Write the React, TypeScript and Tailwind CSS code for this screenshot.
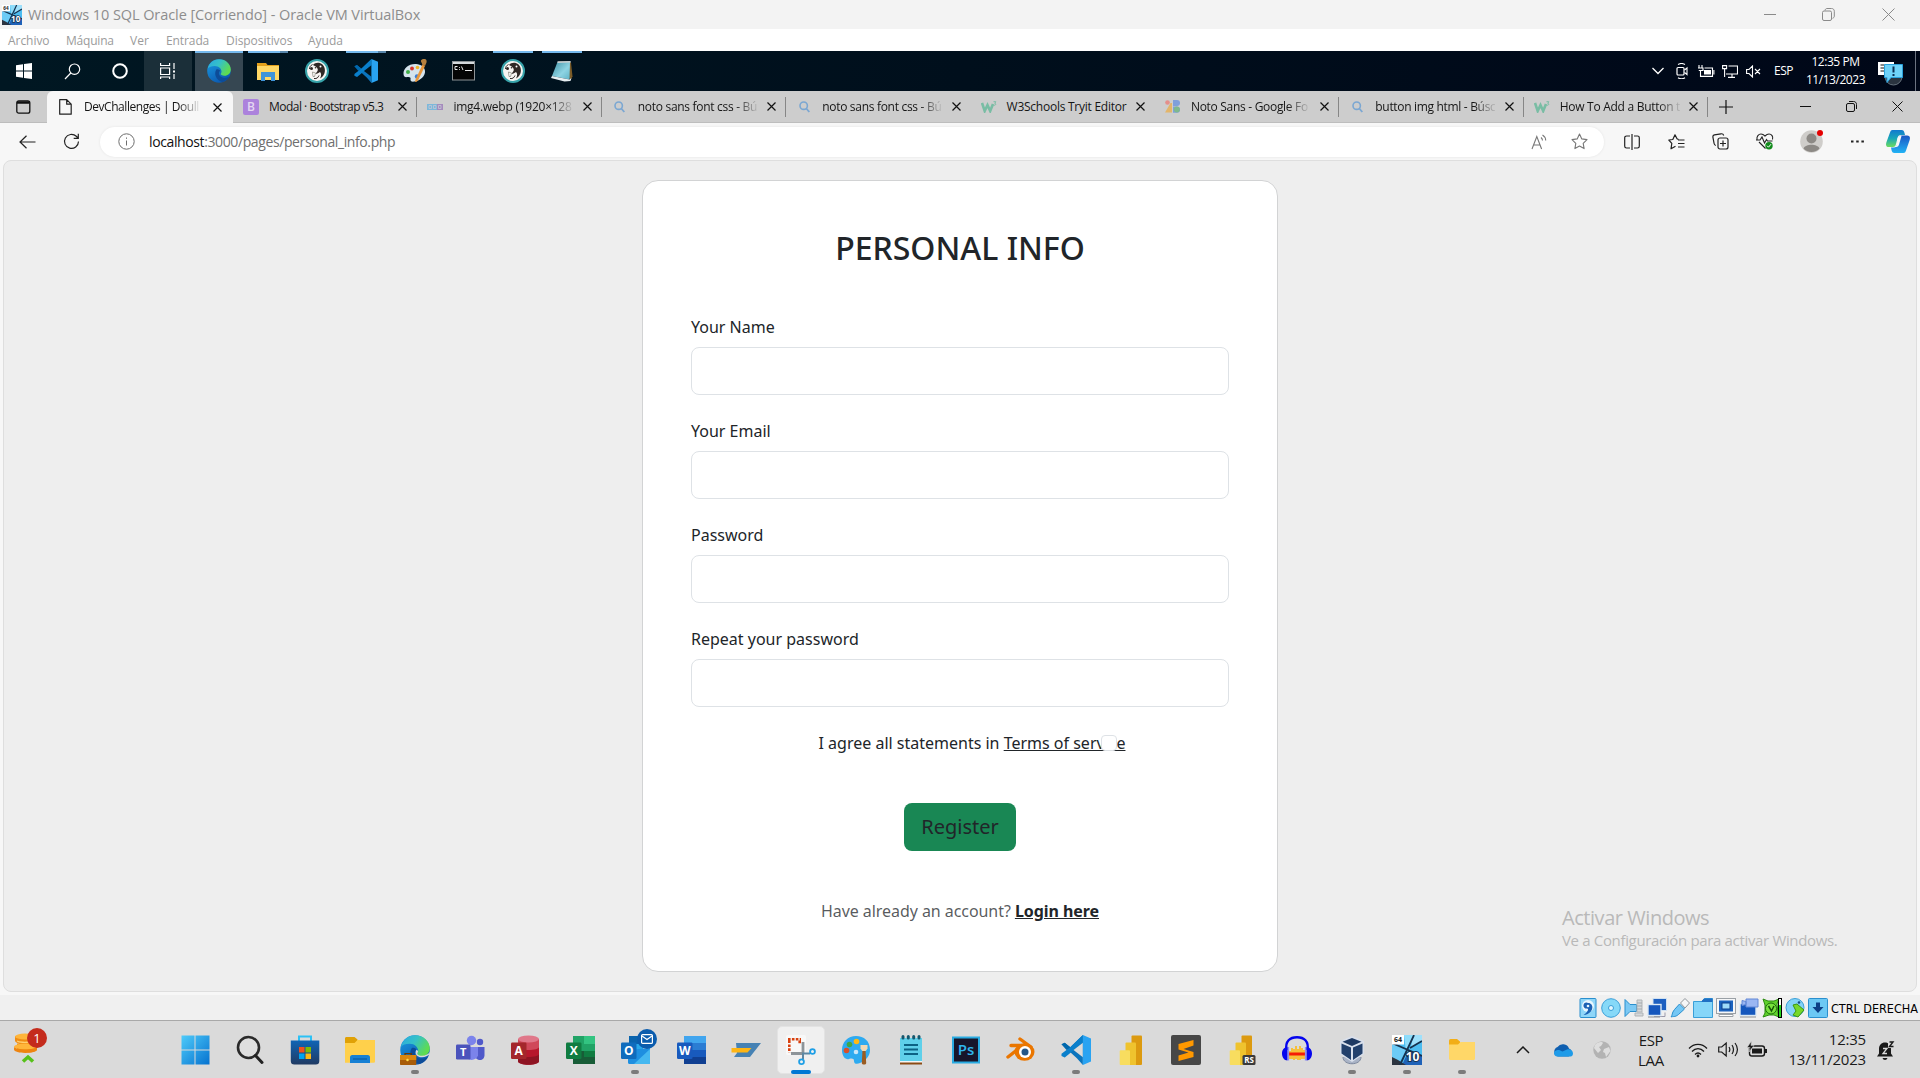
import type { ReactNode } from "react";

const UI = "font-['Open_Sans','Noto_Sans',sans-serif]";

function Svg({ w, h, vb, children, className = "" }: { w: number; h: number; vb?: string; children: ReactNode; className?: string }) {
  return (
    <svg width={w} height={h} viewBox={vb ?? `0 0 ${w} ${h}`} fill="none" className={`shrink-0 ${className}`}>
      {children}
    </svg>
  );
}

/* ---------- Application logos ---------- */

function EdgeLogo({ size, briefcase }: { size: number; briefcase?: boolean }) {
  return (
    <Svg w={size} h={size} vb="0 0 24 24">
      <defs>
        <linearGradient id="edgeTop" x1="0" y1="0" x2="1" y2="0.5">
          <stop offset="0" stopColor="#2aa8e0" />
          <stop offset="0.5" stopColor="#35c1c8" />
          <stop offset="1" stopColor="#5fdc4f" />
        </linearGradient>
        <linearGradient id="edgeBody" x1="0" y1="0" x2="0.6" y2="1">
          <stop offset="0" stopColor="#1b9de2" />
          <stop offset="1" stopColor="#0b58b0" />
        </linearGradient>
      </defs>
      <circle cx="12" cy="12" r="11.8" fill="url(#edgeBody)" />
      <path d="M.8 9.5C2 4 6.500 .2 12 .2c7 0 11.800 5 11.800 10.300 0 3.800-2.900 6.300-6.300 6.300-2.600 0-3.900-1-3.900-1.700 0-.5.9-1 .9-2.700 0-2.500-2.700-5.400-6.800-5.400-3.300 0-5.700 1-6.900 2.500z" fill="url(#edgeTop)" />
      <path d="M9.300 10.500c-2.700 4.500-.3 10.500 6.200 12.700 3-1 5.700-3 7-5.600-3.300 1.900-7.600 1.700-9.500-.5-1.600-1.800-1.400-4.200.2-5.300-.6-1.300-2.500-2.200-3.900-1.300z" fill="#0d4c98" />
      {briefcase && (
        <g>
          <path d="M23.800 15.200c-1.500 1.900-5.200 3.300-8.400 2.300-3-.9-3.500-3.500-2.200-5.700 1.600.6 1.500 1.800.6 2.900 0 1 2 1.900 3.900 1.900 2.300 0 4.700-1 6.100-3z" fill="#dadada" />
          <path d="M4 16v-1.200h5V16" stroke="#6b3b05" />
          <rect x="0" y="16" width="13" height="8" rx=".6" fill="#a85c08" />
          <rect x="0" y="16" width="13" height="4" fill="#d9860f" />
          <circle cx="6" cy="20" r="1" fill="#ffe04a" />
        </g>
      )}
    </Svg>
  );
}

function VsCode({ size }: { size: number }) {
  return (
    <Svg w={size} h={size} vb="0 0 24 24">
      <path d="M17.500 0L7.500 9.800 3 6.200.4 7.300l12.300 11.300L17.500 24z" fill="#0b74bd" />
      <path d="M17.500 6.200V0L7.500 9.500.4 15v1.700L3 17.900z" fill="#0a7fcb" />
      <path d="M.4 7.300L3 6.100l4.400 3.600-3 2.300zM17.500 17.800L10 12l7.500-5.800z" fill="#0068ad" />
      <path d="M10 12l7.500 5.800V6.200z" className="fill-current" />
      <path d="M17.500 0L24 2.800v18.400L17.500 24z" fill="#29a3f2" />
    </Svg>
  );
}

function Beaver() {
  return (
    <Svg w={24} h={24}>
      <circle cx="12" cy="12" r="11" fill="#f7f5f2" stroke="#37a3aa" strokeWidth="2" />
      <path d="M8 6c2-2.500 6.500-3 9.500-.5 3 3 3.300 8 .5 11.500-1 1-2 2-3 2.500 1.500-3 1.500-5 0-6.500-1.800 1-3 2-4.500 1.800 1-1.300 2-2.300 2.300-3.800C13 8.500 10.500 7.500 8 6z" fill="#2f2825" />
      <path d="M4.500 10c0-2 1-3.500 3-4.500" stroke="#2f2825" strokeWidth="1" />
      <circle cx="6.500" cy="9.500" r="1.500" fill="#2f2825" />
      <circle cx="10.500" cy="8.800" r=".8" fill="#2f2825" />
      <circle cx="15.500" cy="7.500" r="1" fill="#fff" />
      <path d="M7.500 13l3 1-1 3.500h-1.500z" fill="#fff" stroke="#554" strokeWidth=".5" />
      <path d="M9 19.500c3 .5 4-1 5-3" stroke="#2f2825" strokeWidth="1" />
    </Svg>
  );
}

function PaintClassic() {
  return (
    <Svg w={24} h={24}>
      <path d="M13 5C6 4.500 0 9.500.5 15c.2 3 2 3.500 4 3 2-.4 3.500.2 3 2-.4 2 1 3 4 2.500 6-1 11-5.500 10.500-10.500C21.700 8 18 5.300 13 5z" fill="#d5e3ec" />
      <circle cx="5" cy="13" r="2" fill="#3fae49" />
      <circle cx="9" cy="9.500" r="1.900" fill="#d7352b" />
      <circle cx="14.500" cy="8.500" r="1.800" fill="#f0b92b" />
      <circle cx="14" cy="17.500" r="2.200" fill="#3d7fd6" />
      <path d="M19.500 5.500L22 7 15 21.500c-.6 1-2.300 1.800-2.700 1.500-.4-.5 0-1.800.5-3z" fill="#e8963a" />
      <path d="M18 1.500c1.500-2 5-1.800 5.500 0 .6 2-1 3.500-1.500 5.500l-3-1.500c.5-1.500-1.500-2.500-1-4z" fill="#b5803f" />
    </Svg>
  );
}

function Cmd() {
  return (
    <Svg w={24} h={20} className="-mt-px">
      <rect x=".5" y=".5" width="22" height="18.500" fill="#050505" stroke="#8e9396" />
      <rect x="1" y="1" width="21" height="2" fill="#d6dadd" />
      <path d="M5.500 5.500H3v3h2.500M7.500 6v.8m0 1.400V9M9.500 5.500l1.500 3.500M13 9.500h7" stroke="#e8e8e8" />
    </Svg>
  );
}

function NotepadClassic() {
  return (
    <Svg w={24} h={24}>
      <path d="M8.500 2.500l12.500 1 1.500 14-2 3.500z" fill="#7b5c28" />
      <path d="M7.500 3L20 2.500l-.5 18L2 17z" fill="url(#npad)" />
      <path d="M2 17l17.500 3.500 2-1.500-1 3-6 .5L1 19z" fill="#e6eef1" />
      <path d="M7.500 2.300L20.500 2l.5 1.500-13.500.5z" fill="#c9cfd1" />
      <defs>
        <linearGradient id="npad" x1="0" y1="0" x2="1" y2="1">
          <stop offset="0" stopColor="#3c8ea2" />
          <stop offset=".6" stopColor="#8ed4e3" />
          <stop offset="1" stopColor="#5fb2c6" />
        </linearGradient>
      </defs>
    </Svg>
  );
}

function ExplorerClassic() {
  return (
    <Svg w={22} h={19}>
      <path d="M0 1h9l1.500 2H22v4H0z" fill="#e3a11c" />
      <rect x="0" y="4" width="22" height="14" fill="#ffd866" />
      <path d="M4 19v-9h14v9h-4v-4H8v4z" fill="#3f94d9" />
    </Svg>
  );
}

function Windows10Box({ size }: { size: number }) {
  return (
    <Svg w={size} h={size} vb="0 0 30 30">
      <rect width="30" height="30" fill="#4cbcf0" />
      <path d="M12 0h10l-5 12-3 4z" fill="#8edcfa" />
      <path d="M0 8l15 6-7 12H0z" fill="#6ccbf6" />
      <path d="M21 0h9v6l-11 7z" fill="#9fe0fb" />
      <path d="M17 15l13 5v10H10z" fill="#1f62b8" />
      <path d="M0 22l6 3 8 5H0z" fill="#2c3440" />
      <path d="M0 8l30 13M22 0L8 30M18 13l12-7" stroke="#16324f" strokeWidth="1.800" />
      <rect x="0" y="0" width="12" height="9.500" fill="#fff" />
      <text x="6" y="7.400" fontSize="7" fontWeight="700" textAnchor="middle" fill="#222" fontFamily="Open Sans">64</text>
      <text x="20.500" y="25.500" fontSize="12" fontWeight="700" textAnchor="middle" fill="#fff" stroke="#16324f" strokeWidth="2" paintOrder="stroke" fontFamily="Open Sans">10</text>
    </Svg>
  );
}

function OfficeLogo({ letter, tile, children }: { letter: string; tile: string; children: ReactNode }) {
  return (
    <Svg w={30} h={30}>
      {children}
      <rect x="1" y="7.500" width="15.500" height="16.500" rx="1.200" fill={tile} />
      <text x="8.700" y="20" fontSize="12" fontWeight="700" textAnchor="middle" fill="#fff" fontFamily="Open Sans">{letter}</text>
    </Svg>
  );
}

const PowerBars = () => (
  <>
    <path d="M12.500 1.500a1 1 0 011-1H22a1 1 0 011 1V29a1 1 0 01-1 1h-9.500z" fill="#dc9a10" />
    <path d="M6.500 8.500a1 1 0 011-1H16a1 1 0 011 1V30H6.500z" fill="#efc32e" />
    <path d="M.7 16.300a1 1 0 011-1H10a1 1 0 011 1V30H1.700a1 1 0 01-1-1z" fill="#f8dd5f" />
  </>
);

/* ---------- Host title and menu ---------- */

function HostTitle() {
  return (
    <div className="flex h-[29px] items-center bg-[#f3f3f3]">
      <div className="flex w-7 pl-[2px]"><Windows10Box size={20} /></div>
      <span className="flex-1 text-[14.500px] tracking-[-0.08px] text-[#8d8d8d]">Windows 10 SQL Oracle [Corriendo] - Oracle VM VirtualBox</span>
      <div className="flex items-center text-[#8a8a8a]">
        <div className="flex w-[58px] justify-center"><Svg w={12} h={12}><path d="M0 5.500h12" stroke="currentColor" /></Svg></div>
        <div className="flex w-[58px] justify-center">
          <Svg w={13} h={13}><rect x=".5" y="3" width="9" height="9.500" rx="1.500" stroke="currentColor" /><path d="M3 2.500C3.200 1.200 4 .5 5 .5h4.500c1.700 0 2.800 1 2.800 2.800V8c0 1.200-.7 2-1.800 2.300" stroke="currentColor" /></Svg>
        </div>
        <div className="mr-[1px] flex w-[62px] justify-center"><Svg w={13} h={13}><path d="M.5.500l12 12M12.500.500l-12 12" stroke="currentColor" /></Svg></div>
      </div>
    </div>
  );
}

function HostMenu() {
  return (
    <div className="flex h-[22px] items-center bg-white pt-[2px] text-[12px] leading-none text-[#9b9b9b]">
      <span className="w-[58px] pl-2 tracking-[-0.05px]">Archivo</span>
      <span className="w-[64px] pl-2 tracking-[-0.2px]">Máquina</span>
      <span className="w-[36px] pl-2">Ver</span>
      <span className="w-[60px] pl-2 tracking-[-0.1px]">Entrada</span>
      <span className="w-[82px] pl-2 tracking-[-0.05px]">Dispositivos</span>
      <span className="pl-2">Ayuda</span>
    </div>
  );
}

/* ---------- Guest taskbar ---------- */

function GuestApp({ children, line, stacked, active }: { children: ReactNode; line?: boolean; stacked?: boolean; active?: boolean }) {
  return (
    <div className={`relative flex h-full w-12 items-center justify-center ${active ? "bg-[#364752] text-[#364752]" : "text-[#00141f]"}`}>
      {line && (
        <span className={`absolute top-0 flex h-[2px] ${active ? "inset-x-0" : "inset-x-1"}`}>
          <span className="flex-1 bg-[#76b9ed]" />
          {stacked && <span className="w-2 bg-[#5987ac]" />}
        </span>
      )}
      {children}
    </div>
  );
}

function GuestTaskbar() {
  return (
    <div className="flex h-10 items-stretch bg-linear-to-r from-[#001722] via-[#000f1c] to-[#000718] text-white">
      <div className="flex w-12 items-center justify-center">
        <Svg w={16} h={16}><path d="M0 2.200l7-1v6.300H0zM8 1l8-1v7.500H8zM0 8.500h7v6.300l-7-1zM8 8.500h8V16l-8-1z" fill="#fff" /></Svg>
      </div>
      <div className="flex w-12 items-center justify-center">
        <Svg w={17} h={17}><circle cx="10.500" cy="6.200" r="5.200" stroke="#fff" strokeWidth="1.200" /><path d="M6.800 10L1 16" stroke="#fff" strokeWidth="1.200" /></Svg>
      </div>
      <div className="flex w-12 items-center justify-center">
        <Svg w={16} h={16}><circle cx="8" cy="8" r="6.800" stroke="#fff" strokeWidth="2" /></Svg>
      </div>
      <div className="mr-[3px] flex w-12 items-center justify-center bg-[#1b2f39]">
        <Svg w={16} h={16}><path d="M.6 0v2.500h9V0M.6 5h9v6.500h-9zM.6 16v-2h9v2M14 0v6M14 11v5" stroke="#fff" strokeWidth="1.200" /><path d="M13 7.500h2v2h-2z" fill="#fff" /></Svg>
      </div>
      <div className="flex gap-px">
        <GuestApp line active><EdgeLogo size={24} /></GuestApp>
        <GuestApp line stacked><ExplorerClassic /></GuestApp>
        <GuestApp><Beaver /></GuestApp>
        <GuestApp line stacked><VsCode size={24} /></GuestApp>
        <GuestApp><PaintClassic /></GuestApp>
        <GuestApp><Cmd /></GuestApp>
        <GuestApp line><Beaver /></GuestApp>
        <GuestApp line><NotepadClassic /></GuestApp>
      </div>
      <div className="flex-1" />
      <div className="flex items-center">
        <div className="flex w-6 justify-center"><Svg w={12} h={8}><path d="M.5 1L6 6.500 11.500 1" stroke="#fff" strokeWidth="1.300" /></Svg></div>
        <div className="flex w-6 justify-center">
          <Svg w={12} h={16}><rect x="1" y="4.500" width="7" height="7.500" rx="1" stroke="#fff" strokeWidth="1.200" /><path d="M8.500 7l2.500-2v6.500L8.500 9.500M2 1.500C4 .3 7 .3 9 1.500M2 14.700c2 1.200 5 1.200 7 0" stroke="#fff" strokeWidth="1.100" /></Svg>
        </div>
        <div className="flex w-6 justify-center">
          <Svg w={17} h={13}><path d="M4.500 11.400h10V3h-8M15.900 5v4.500M1 0v2.500M4 0v2.500M0 3h5v2.500H.8M2.500 5v6.400H5" stroke="#fff" strokeWidth="1.100" /><rect x="6" y="5" width="7" height="4.500" fill="#fff" /></Svg>
        </div>
        <div className="flex w-6 justify-center">
          <Svg w={16} h={13}><path d="M6.500 1h9v8H4M10 9v3M6 12.400h7M.6.600h4v3h-4zM2.600 4v8" stroke="#fff" strokeWidth="1.100" /></Svg>
        </div>
        <div className="flex w-[23px] justify-center">
          <Svg w={15} h={13}><path d="M.6 4.500v4H3l3.500 3.500V1L3 4.500zM9 4l5 5M14 4L9 9" stroke="#fff" strokeWidth="1.100" /></Svg>
        </div>
        <span className="w-[37px] text-center text-[12px] tracking-[-0.5px]">ESP</span>
        <div className="w-[67px] whitespace-nowrap text-center text-[12px] leading-[18px] tracking-[-0.45px]">
          <div>12:35 PM</div>
          <div>11/13/2023</div>
        </div>
        <div className="ml-1 flex w-[35px] justify-center">
          <Svg w={26} h={26} className="mt-[5px]">
            <path d="M0 1h16v13H0z" fill="#fff" />
            <path d="M2.500 4h4M2.500 7h4M2.500 10h4" stroke="#111" />
            <circle cx="15.500" cy="15.500" r="8.500" fill="#2a3440" stroke="#66727d" />
            <path d="M6.500 3.500h18v13H13l-4 5v-5H6.500z" fill="#6fd2f8" stroke="#2aa0db" />
            <path d="M15.500 5.500v6M15.500 13v2" stroke="#0b2d52" strokeWidth="2" />
          </Svg>
        </div>
      </div>
      <div className="ml-[7px] w-[5px] border-l border-[#6b7280]" />
    </div>
  );
}

/* ---------- Browser ---------- */

const MagFav = () => (
  <Svg w={11} h={12}><circle cx="4.700" cy="4.700" r="3.700" stroke="#7ba7d2" strokeWidth="1.600" /><path d="M7.300 7.500l3 3.500" stroke="#7ba7d2" strokeWidth="1.800" /></Svg>
);
const W3Fav = () => (
  <Svg w={16} h={12}><path d="M1 2l2.700 8L6.500 4l2.700 6L12 3" stroke="#79bda4" strokeWidth="2.600" /><path d="M12.500.7h2.300l-1 1.700c1.400 0 1.400 2.300-1.300 1.800" stroke="#79bda4" strokeWidth="1" /></Svg>
);

const FADE = "mask-r-from-82% mask-r-to-102%";

type Tab = { title: string; icon: ReactNode; sep?: boolean; fade?: boolean; track: string };
const tabs: Tab[] = [
  { title: "Modal · Bootstrap v5.3", sep: true, track: "tracking-[-0.52px]", icon: <span className="flex size-4 items-center justify-center rounded-[2px] bg-[#ac82dc] text-[12px] font-semibold leading-none text-[#e4d7f2]">B</span> },
  { title: "img4.webp (1920×128", sep: true, fade: true, track: "tracking-[-0.25px]", icon: <Svg w={16} h={6}><rect width="11" height="6" fill="#7db8da" /><rect x="10" width="6" height="6" fill="#a58bbd" /><path d="M2 1.500h2.500v3H2zM6.500 1.500H9v3H6.500zM11.500 1.500H14v3h-2.500z" stroke="#c6c6d6" strokeWidth=".8" /></Svg> },
  { title: "noto sans font css - Bú", sep: true, fade: true, track: "tracking-[-0.3px]", icon: <MagFav /> },
  { title: "noto sans font css - Bú", fade: true, track: "tracking-[-0.3px]", icon: <MagFav /> },
  { title: "W3Schools Tryit Editor", track: "tracking-[-0.25px]", icon: <W3Fav /> },
  { title: "Noto Sans - Google Fo", sep: true, fade: true, track: "tracking-[-0.3px]", icon: <Svg w={15} h={13}><circle cx="2.500" cy="2.500" r="2.300" fill="#e58f8a" /><path d="M0 12.500L5.500 3H7v9.500z" fill="#e3b56a" /><path d="M8 0h4a3 3 0 010 6H8z" fill="#7f9fdb" /><path d="M8 6.500h4a3 3 0 010 6.300H8z" fill="#7fa0db" /><circle cx="11.800" cy="9.600" r="3" fill="#7fb98d" /></Svg> },
  { title: "button img html - Búsc", sep: true, fade: true, track: "tracking-[-0.32px]", icon: <MagFav /> },
  { title: "How To Add a Button t", sep: true, fade: true, track: "tracking-[-0.28px]", icon: <W3Fav /> },
];

const Close = () => <Svg w={9} h={9}><path d="M.5.500l8 8M8.500.500l-8 8" stroke="#111" strokeWidth="1.200" /></Svg>;

function TabStrip() {
  return (
    <div className="flex h-8 items-stretch bg-[#cdcdcd] text-[12px] text-[#151515]">
      <div className="flex w-[47px] shrink-0 items-center justify-center border-b border-[#bdbdbd]">
        <Svg w={15} h={14}><rect x=".8" y=".8" width="13" height="12.400" rx="2" stroke="#111" strokeWidth="1.300" /><path d="M1 2.500h12.500" stroke="#111" strokeWidth="2.500" /></Svg>
      </div>
      <div className="flex w-[186px] shrink-0 items-center rounded-t-md bg-[#f7f7f7] pl-3 pr-[11px]">
        <Svg w={13} h={16}><path d="M.7.700h7l4.500 4.500v10H.7zM7.700.700v4.500h4.500" stroke="#222" strokeWidth="1.200" strokeLinejoin="round" /></Svg>
        <span className={`ml-3 whitespace-nowrap tracking-[-0.45px] ${FADE}`}>DevChallenges | Doull</span>
        <span className="ml-auto"><Close /></span>
      </div>
      {tabs.map((t, i) => (
        <div key={i} className="relative flex w-[184.400px] shrink-0 items-center border-b border-[#bdbdbd] pl-[10px] pr-[10px]">
          <span className="flex w-4 justify-center">{t.icon}</span>
          <span className={`ml-[10px] whitespace-nowrap ${t.track} ${t.fade ? FADE : ""}`}>{t.title}</span>
          <span className="ml-auto"><Close /></span>
          {t.sep && <span className="absolute right-0 top-[6px] h-5 w-px bg-[#868686]" />}
        </div>
      ))}
      <div className="flex flex-1 items-center border-b border-[#bdbdbd] pl-[11px]">
        <Svg w={14} h={14}><path d="M7 0v14M0 7h14" stroke="#111" strokeWidth="1.200" /></Svg>
        <div className="ml-auto flex items-center">
          <div className="flex w-[46px] justify-center"><Svg w={11} h={11}><path d="M0 5.500h11" stroke="#111" /></Svg></div>
          <div className="flex w-[46px] justify-center">
            <Svg w={11} h={11}><rect x=".5" y="2.500" width="8" height="8" rx="1.500" stroke="#111" /><path d="M3 .5h4.500c1.900 0 3 1.100 3 3V8" stroke="#111" /></Svg>
          </div>
          <div className="flex w-[46px] justify-center"><Svg w={11} h={11}><path d="M.5.500l10 10M10.500.500l-10 10" stroke="#111" /></Svg></div>
        </div>
      </div>
    </div>
  );
}

const starPath = "M8.500 1l2.300 4.900 5.200.7-3.800 3.700.9 5.300-4.600-2.500-4.600 2.500.9-5.300L1 6.600l5.200-.7z";

function Toolbar() {
  return (
    <div className="flex h-[37px] items-center bg-[#f7f7f7]">
      <div className="flex w-[55px] shrink-0 justify-center"><Svg w={17} h={14}><path d="M16.500 7H1M7.500 .700L1 7l6.500 6.300" stroke="#222" strokeWidth="1.200" /></Svg></div>
      <div className="flex w-[45px] shrink-0 pl-2"><Svg w={17} h={17}><path d="M15.500 8.500a7 7 0 11-2.200-5.200l1.700 1.700M15.300.700V5.300h-4.600" stroke="#222" strokeWidth="1.200" /></Svg></div>
      <div className="flex h-[30px] w-[1504px] shrink-0 items-center rounded-full bg-white pl-[18px] shadow-[0_0_3px_rgba(0,0,0,0.08)]">
        <Svg w={17} h={17}><circle cx="8.500" cy="8.500" r="7.700" stroke="#6d6d6d" /><path d="M8.500 7.500v5M8.500 4.500v1.300" stroke="#6d6d6d" /></Svg>
        <span className="ml-[14px] text-[14px] tracking-[-0.390px] text-[#6f6f6f]"><span className="text-[#111]">localhost</span>:3000/pages/personal_info.php</span>
        <div className="ml-auto flex items-center pr-4">
          <Svg w={17} h={16} className="mr-[23px]"><path d="M1 15L5.800 2.500 10.600 15M2.600 11h6.400M10 3.500c1 .8 1.500 1.800 1.500 3M11.500 1c2 1.200 3.200 3 3.200 5.500" stroke="#777" strokeWidth="1.100" /></Svg>
          <Svg w={17} h={17}><path d={starPath} stroke="#777" strokeWidth="1.100" strokeLinejoin="round" /></Svg>
        </div>
      </div>
      <div className="flex items-center text-[#222]">
        <div className="flex w-[55px] justify-center"><Svg w={16} h={16}><path d="M6 2H2.500C1.500 2 .7 2.700.7 3.700v8.600c0 1 .8 1.700 1.800 1.700H6M10 2h3.500c1 0 1.800.7 1.800 1.700v8.600c0 1-.8 1.700-1.800 1.700H10M8 0v16" stroke="currentColor" strokeWidth="1.200" /></Svg></div>
        <div className="flex w-[34px] justify-center"><Svg w={17} h={16}><path d="M10.500 5.500L9 4.700 7 .800 4.800 5.500.8 6l3 3.300L3 14.800l4.500-2.500M10 6h6.500M10 9.500h6.500M10 13h6.500" stroke="currentColor" strokeWidth="1.200" strokeLinejoin="round" /></Svg></div>
        <div className="flex w-[54px] justify-center"><Svg w={17} h={17}><rect x="6" y="5" width="10" height="11" rx="2" stroke="currentColor" strokeWidth="1.200" /><path d="M11 7.500v6M8 10.500h6M3.800 12.500c-1-.3-1.500-1-1.700-2L.9 4.200c-.2-1.200.4-2 1.500-2.300L9 .800c1.200-.2 2.300.3 2.700 1.700" stroke="currentColor" strokeWidth="1.200" /></Svg></div>
        <div className="flex w-[36px] justify-center">
          <Svg w={18} h={17}><path d="M1 6.500C.5 3.500 2.500 1 5 1c1.800 0 3 1 4 2 1-1 2.200-2 4-2 2.500 0 4.500 2.500 3.500 5.500M0 7h4l2-3 2.500 6 2-3.500 1 1.500h5M3 9l6.500 6.500" stroke="currentColor" strokeWidth="1.100" /><circle cx="13" cy="12.700" r="3.700" fill="#128a1c" /><path d="M11 12.700l1.500 1.500 2.500-3" stroke="#fff" /></Svg>
        </div>
        <div className="relative flex w-[56px] justify-center">
          <Svg w={23} h={23}><circle cx="11.500" cy="11.500" r="11.300" fill="#cfcdca" /><circle cx="11.500" cy="8.500" r="5" fill="#8c8985" /><path d="M3.500 18.500c2-5 14-5 16 0-3.500 4.500-12.500 4.500-16 0z" fill="#8c8985" /></Svg>
          <span className="absolute right-[16px] top-0 size-[6px] rounded-full bg-[#e50000]" />
        </div>
        <div className="flex w-[36px] justify-center"><Svg w={13} h={3}><path d="M0 .500h2.500v2H0zM5.200.500h2.500v2H5.200zM10.400.500h2.500v2h-2.500z" fill="#222" /></Svg></div>
        <div className="flex w-[45px] justify-center">
          <Svg w={24} h={23}>
            <defs>
              <linearGradient id="cpA" x1="0" y1="0" x2="0" y2="1"><stop offset="0" stopColor="#1179cf" /><stop offset=".5" stopColor="#19a7b8" /><stop offset="1" stopColor="#6cdc5e" /></linearGradient>
              <linearGradient id="cpB" x1="0" y1="0" x2="0" y2="1"><stop offset="0" stopColor="#1a56c4" /><stop offset="1" stopColor="#22b3f5" /></linearGradient>
            </defs>
            <path d="M6.500 0h9c2 0 2.500 1 3 3l.5 2h-4c-2 0-3 1-3.500 3l-1.500 6c-.5 2-1 3-3 3H3c-3 0-3.500-2-2.500-5L4 2.500C4.500.800 5.200 0 6.500 0z" fill="url(#cpA)" />
            <path d="M17.500 23h-9c-2 0-2.500-1-3-3L5 17.500h3c2 0 2.500-1 3-3l1.500-6c.5-2 1.500-3 3.500-3h5c3 0 3.500 2 2.500 5L20 20.500c-.5 1.700-1.200 2.500-2.500 2.500z" fill="url(#cpB)" />
            <path d="M11.500 8.500c.5-1.500 1-2.500 3-2.500h1l-2.300 8c-.5 2-1.500 3-3 3H9c1.200-.3 1.500-1.500 2-3.500z" fill="#f7f7f7" />
          </Svg>
        </div>
      </div>
    </div>
  );
}

function Field({ label }: { label: string }) {
  return (
    <div className="mb-6">
      <label className="mb-2 block leading-6">{label}</label>
      <input className="block h-12 w-full rounded-lg border border-[#dee2e6] bg-white" />
    </div>
  );
}

function PersonalInfoCard() {
  return (
    <div className="w-[636px] rounded-2xl border border-[#d2d3d4] bg-white p-12 font-['Noto_Sans',sans-serif] text-[16px] text-[#212529]">
      <h2 className="mb-12 text-center text-[32px] font-medium leading-[38.400px]">PERSONAL INFO</h2>
      <Field label="Your Name" />
      <Field label="Your Email" />
      <Field label="Password" />
      <Field label="Repeat your password" />
      <div className="mb-12 flex justify-center leading-6">
        <div className="relative pl-6">
          I agree all statements in <a className="underline">Terms of service</a>
          <span className="absolute right-[8.500px] top-1 size-4 rounded-[4px] border border-[#dee2e6] bg-white" />
        </div>
      </div>
      <div className="flex justify-center">
        <button className="h-12 w-28 rounded-lg bg-[#198754] text-[20px] leading-[30px]">Register</button>
      </div>
      <p className="mt-12 text-center leading-6 tracking-[-0.060px] text-[#212529]/75">
        Have already an account? <a className="font-bold text-[#212529] underline">Login here</a>
      </p>
    </div>
  );
}

function PageView() {
  return (
    <div className="h-[835px] bg-[#f7f7f7] px-[3px] pb-[3px]">
      <div className="relative flex h-[832px] items-start justify-center rounded-lg border border-[#dedede] bg-[#eee] pt-[19px]">
        <PersonalInfoCard />
        <div className="absolute left-[1558px] top-[744px] text-[#b9b9b9]">
          <div className="text-[20px] leading-[26px] tracking-[-0.450px]">Activar Windows</div>
          <div className="-mt-px text-[15px] leading-5 tracking-[-0.340px]">Ve a Configuración para activar Windows.</div>
        </div>
      </div>
    </div>
  );
}

/* ---------- VirtualBox status bar ---------- */

const vboxIcons: ReactNode[] = [
  <><rect x="2" y=".5" width="16" height="19" rx="1" fill="#8fd6f8" stroke="#2a8fce" /><circle cx="10" cy="8" r="6" fill="#e8f7fe" /><path d="M10 5a3 3 0 10-1 5.500c2.500 0 .5 4-3.500 6.500 6 0 11-6 8-10.500-1-1.300-2.500-1.800-3.500-1.500z" fill="#1c62b4" /><circle cx="10" cy="8" r="1.300" fill="#e8f7fe" /></>,
  <><circle cx="10" cy="10" r="9.300" fill="#86d9f8" stroke="#3a9fd8" /><circle cx="10" cy="10" r="2.500" fill="#e6f7fe" stroke="#3a9fd8" /></>,
  <><path d="M1 1.500l5 5h6.500v7H6l-5 5z" fill="#7cc9f4" stroke="#2a8fce" /><path d="M13 2h5v12h-5zM11 15h8v3h-8z" fill="#d5d8da" stroke="#b0b4b7" /><path d="M13 5h5M13 8h5M13 11h5" stroke="#a5a9ac" /></>,
  <><rect x="6" y=".5" width="13.500" height="12" fill="#1c5fc0" stroke="#cfe1f2" /><path d="M7 18.500h11v-4" stroke="#99a" /><rect x="1" y="6.500" width="13" height="11" fill="#1557bd" stroke="#dbe9f5" strokeWidth="1.400" /><path d="M1 19h12" stroke="#8b8f94" /></>,
  <><path d="M1 19c1.500-1 .5-4 3.500-7.500L9.500 6l5 5-6 5.500C5 19.500 3 18 1 19z" fill="#74c7f5" stroke="#2a8fce" /><path d="M10.500 5l4.500-4.500L19.500 5 15 10z" fill="#f5f6f7" stroke="#8f959a" /></>,
  <><path d="M.5 3.500h8l3-3h8v19H.5z" fill="#86d6f9" stroke="#3a9fd8" /><path d="M11 .500h8.500V4H8z" fill="#1f6fc4" /></>,
  <><rect x=".5" y=".5" width="19" height="15" fill="#f6f7f8" stroke="#9aa0a6" /><rect x="3" y="2.500" width="14" height="11" fill="#1b63bf" /><rect x="6" y="5" width="8" height="6" fill="#9fdaf9" stroke="#0c3e8c" /><path d="M3 18.500h14v-2H3z" fill="#fff" stroke="#9aa0a6" /></>,
  <><rect x="1" y="5.500" width="16" height="12" fill="#1557bd" stroke="#dbe9f5" strokeWidth="1.400" /><path d="M1 19h16" stroke="#8b8f94" /><path d="M7 1h12v8H7zM3 2.500l4 1v3l-4 1z" fill="#9ab6f2" stroke="#6388d6" /></>,
  <><path d="M1 1l5 2h6l5-2-2 5 1 9 1 4-5-2H7l-6 2 2-4V7z" fill="#5fd12a" stroke="#2c8a10" /><circle cx="9" cy="10.500" r="5.500" fill="#78e23c" stroke="#1e6f0c" /><path d="M6.500 8l3 5 2.500-5" stroke="#145406" strokeWidth="1.500" /><rect x="16.500" y=".5" width="3" height="19" fill="#fff" stroke="#000" /><rect x="17" y="7" width="2" height="12" fill="#25d61c" /></>,
  <><circle cx="10" cy="9.500" r="9" fill="#82d2f7" stroke="#3a9fd8" /><path d="M8 7l4-1 7 6-6 7-5-2 3-4z" fill="#76d82a" stroke="#3c960f" /><circle cx="14" cy="4.500" r="1.300" fill="#174b86" /></>,
  <><rect x=".5" y=".5" width="19" height="19" rx="1" fill="#6cc8f4" stroke="#2a8fce" /><path d="M8 4.500h4V9h3.500L10 15 4.500 9H8z" fill="#0d3f86" /></>,
];

function StatusBar() {
  return (
    <div className="flex h-[25px] items-center justify-end bg-[#f0f0f0]">
      <div className="flex gap-[3px]">
        {vboxIcons.map((icon, i) => <Svg key={i} w={20} h={20}>{icon}</Svg>)}
      </div>
      <span className="ml-[3px] w-[89px] whitespace-nowrap pt-[3px] font-['DejaVu_Sans_Condensed','DejaVu_Sans',sans-serif] text-[12.500px] leading-none tracking-[-0.010px] text-black">CTRL DERECHA</span>
    </div>
  );
}

/* ---------- Host taskbar ---------- */

type HostApp = { icon: ReactNode; running?: boolean; active?: boolean };

const hostApps: HostApp[] = [
  { icon: <Svg w={30} h={30}><defs><linearGradient id="win" x1="0" y1="0" x2="1" y2="1"><stop offset="0" stopColor="#4ecbfa" /><stop offset="1" stopColor="#0672cf" /></linearGradient></defs><path d="M1.500.500h13v14h-13zM15.500.500h14v14h-14zM1.500 15.500h13v14h-13zM15.500 15.500h14v14h-14z" fill="url(#win)" /></Svg> },
  { icon: <Svg w={30} h={30}><circle cx="13.500" cy="12.500" r="10.500" stroke="#2a2a2a" strokeWidth="2.600" fill="#dfdfdf" /><path d="M20.500 20.500l6.500 7" stroke="#222" strokeWidth="3" strokeLinecap="round" /></Svg> },
  { icon: <Svg w={30} h={30}><defs><linearGradient id="store" x1="0" y1="0" x2="0" y2="1"><stop offset="0" stopColor="#0f65b5" /><stop offset="1" stopColor="#203a63" /></linearGradient></defs><path d="M9 6V1.500h12V6" stroke="#2cc1f5" strokeWidth="2" /><path d="M.800 5.500h28.500V26a3.500 3.500 0 01-3.500 3.500H4.300A3.500 3.500 0 01.8 26z" fill="url(#store)" /><path d="M9 12h5.500v5.500H9z" fill="#f1511b" /><path d="M15.500 12H21v5.500h-5.500z" fill="#80ba01" /><path d="M9 18.500h5.500V24H9z" fill="#00a4ef" /><path d="M15.500 18.500H21V24h-5.500z" fill="#fdb813" /></Svg> },
  { icon: <Svg w={30} h={30}><path d="M0 3.500C0 2.500.7 2 1.500 2h8l3 2.500v4H0z" fill="#e0a106" /><path d="M0 8h9.500l3-3H30v21.500c0 .8-.4 1.200-1.200 1.200H0z" fill="#ffd04b" /><path d="M5 28v-5.500c0-1.500.8-2.500 2.300-2.500h15.400c1.500 0 2.300 1 2.300 2.500V28z" fill="#1680d4" /><path d="M8 24h14" stroke="#0a5ba5" strokeWidth="1.200" /></Svg> },
  { icon: <EdgeLogo size={30} briefcase />, running: true },
  { icon: <Svg w={30} h={30}><circle cx="16.500" cy="5.500" r="4.700" fill="#7b83eb" /><circle cx="25" cy="7" r="3.200" fill="#5059c9" /><path d="M20 12h9.500v8c0 3-2 5-4.500 5s-5-2-5-5z" fill="#5059c9" /><path d="M10 12h13v8.500a7 7 0 01-13 0z" fill="#7b83eb" /><rect x="1" y="9.500" width="14.500" height="15" rx="1.200" fill="#4b53bc" /><text x="8.200" y="21" fontSize="11" fontWeight="700" textAnchor="middle" fill="#fff" fontFamily="Open Sans">T</text></Svg> },
  { icon: <OfficeLogo letter="A" tile="#a4262c"><path d="M8 4v22c0 5 21 5 21 0V4z" fill="#b7172c" /><path d="M8 4v8c0 4 21 4 21 0V4z" fill="#d0485a" /><path d="M8 19v7c0 5 21 5 21 0v-7c0 4-21 4-21 0z" fill="#8e1423" /><ellipse cx="18.500" cy="4" rx="10.500" ry="3.500" fill="#e0788a" /></OfficeLogo> },
  { icon: <OfficeLogo letter="X" tile="#107c41"><path d="M8 1h11v8H8zM8 9h11v7H8z" fill="#21a366" /><path d="M19 1h11v8H19z" fill="#33c481" /><path d="M19 9h11v7H19z" fill="#21a366" /><path d="M8 16h22v13H8z" fill="#185c37" /><path d="M19 16h11v6H19z" fill="#107c41" /></OfficeLogo> },
  { running: true, icon: <div className="relative"><OfficeLogo letter="O" tile="#0f6cbd"><path d="M9 1h14v15H9z" fill="#0a64ad" /><path d="M16 9h7v7h-7z" fill="#28a8ea" /><path d="M8 15l22-2v14.500c0 .8-.5 1.500-1.500 1.500H9.500c-1 0-1.500-.7-1.500-1.500z" fill="#1e8fe0" /><path d="M30 14L14 29h14.500c1 0 1.500-.7 1.500-1.500z" fill="#45b8f0" /></OfficeLogo><span className="absolute -right-[7px] -top-[6px] flex size-5 items-center justify-center rounded-full bg-[#0b5cad]"><Svg w={12} h={10}><rect x=".600" y=".600" width="10.800" height="8.800" rx="1" stroke="#fff" strokeWidth="1.200" /><path d="M1 2l5 3.500L11 2" stroke="#fff" strokeWidth="1.200" /></Svg></span></div> },
  { icon: <OfficeLogo letter="W" tile="#185abd"><path d="M8 1h22v7H8z" fill="#41a5ee" /><path d="M8 8h22v7H8z" fill="#2b7cd3" /><path d="M8 15h22v7H8z" fill="#185abd" /><path d="M8 22h22v7H8z" fill="#103f91" /></OfficeLogo> },
  { icon: <Svg w={30} h={16}><path d="M5 1h25L19 15H3l3-4z" fill="#4682b4" /><path d="M.500 6h20l-4 4.500H.5z" fill="#fdb515" /></Svg> },
  { active: true, icon: <Svg w={30} h={30}><rect x="0" y="0" width="20" height="20" rx="2" fill="#f8f8f8" /><path d="M2 4.300h13M3.300 5.500v12M13.700 5.600v3" stroke="#d8400e" strokeWidth="2.600" strokeDasharray="2.600 1.300" /><path d="M17 7v12M5 18.500h12" stroke="#8d9499" strokeWidth="2.800" /><path d="M17 18v6M16 18.500h8" stroke="#5c87a3" strokeWidth="2" /><circle cx="26.500" cy="16.500" r="2.400" stroke="#1e9fe6" strokeWidth="1.800" /><circle cx="15.500" cy="26.700" r="2.400" stroke="#1e9fe6" strokeWidth="1.800" /></Svg> },
  { icon: <Svg w={30} h={30}><path d="M15 1C7 1 1 7 1 15c0 7 4 10 7 9 3-1 5-.5 5 2 0 3 3 3.500 6 2 6-2.500 10-7 10-13C29 6 23 1 15 1z" fill="#2eaaf0" /><circle cx="8.500" cy="9.500" r="2.800" fill="#3fa648" /><circle cx="15.500" cy="6.500" r="2.800" fill="#fdb913" /><circle cx="5.500" cy="15.500" r="2.800" fill="#d8502a" /><circle cx="15" cy="17" r="2.300" fill="#c9e6f8" /><path d="M21.500 15h3l.7 13c0 2-4.400 2-4.400 0z" fill="#9a5c22" /><path d="M19.500 10h7v3.500l-1.700 2.500h-3.600l-1.700-2.500z" fill="#f1d8b4" /></Svg> },
  { icon: <Svg w={26} h={30}><path d="M2 3h22v23H2z" fill="#5fd0ea" /><path d="M2 26h22v3.500H2z" fill="#8a4b14" /><path d="M2 26h22v1.500H2z" fill="#f4f4f4" /><path d="M6 10h14M6 14.500h14M6 19h14" stroke="#0c6284" strokeWidth="1.800" /><path d="M5 1.500v1.500M10.300 1.500v1.500M15.700 1.500v1.500M21 1.500v1.500" stroke="#14586f" strokeWidth="3" strokeLinecap="round" /></Svg> },
  { icon: <Svg w={30} h={28}><rect x="2" y="1.500" width="26" height="25" fill="#17162b" stroke="#29abe2" strokeWidth="2" /><text x="15" y="19" fontSize="15" fontWeight="600" textAnchor="middle" fill="#2fb6ee" fontFamily="Open Sans">Ps</text></Svg> },
  { icon: <Svg w={30} h={26}><path d="M14 2l11 8M5 8.500h14M2 20L14 10.500" stroke="#ea7600" strokeWidth="3.400" strokeLinecap="round" /><ellipse cx="18.500" cy="15" rx="10" ry="8.700" fill="#ea7600" /><circle cx="19" cy="15" r="6" fill="#fff" /><circle cx="19" cy="15" r="3.500" fill="#265787" /></Svg> },
  { running: true, icon: <span className="text-[#dadada]"><VsCode size={30} /></span> },
  { icon: <Svg w={24} h={30}><PowerBars /></Svg> },
  { icon: <Svg w={30} h={30}><rect width="30" height="30" rx="2" fill="#474747" /><path d="M22.500 5v5.500L12.500 14l10 3v5L7.500 26v-5.500l10-3-10-3V9z" fill="#ff9800" /></Svg> },
  { icon: <Svg w={28} h={30}><g transform="translate(1 0)"><PowerBars /></g><rect x="14.500" y="20" width="13" height="10" rx="1.500" fill="#3a3a3a" /><text x="21" y="28" fontSize="8" fontWeight="700" textAnchor="middle" fill="#fff" fontFamily="Open Sans">RS</text></Svg> },
  { icon: <Svg w={30} h={30}><path d="M4.500 15C3 6 8 2.200 15 2.200S27 6 25.500 15" stroke="#0404ee" strokeWidth="2.400" /><path d="M8 16v8M10 13v11M12 14v11M14 11v13M16 14v11M18 11v14M20 13v11M22 15v9" stroke="#fdb913" strokeWidth="1.600" /><path d="M7 19h16" stroke="#f51b06" strokeWidth="3" /><path d="M5.500 12C2 12 0 15 0 18.500s2 7 5.500 7zM24.500 12c3.500 0 5.500 3 5.500 6.500s-2 7-5.500 7z" fill="#0606ee" /><path d="M6.500 12v13.500M23.500 12v13.500" stroke="#8e8ef0" strokeWidth="1.200" /></Svg> },
  { running: true, icon: <Svg w={26} h={30}><path d="M4 22c0 9 18 9 18 0" fill="#a9b3c6" stroke="#7d899f" /><path d="M13 1l12 5v13l-12 8L1 19V6z" fill="#d9e0ec" /><path d="M13 3l9.500 3.800L13 11 3.500 6.800z" fill="#1f3a63" /><path d="M2.500 8.500l9.500 4V25l-9.500-6.500zM23.500 8.500l-9.500 4V25l9.500-6.500z" fill="#22406c" /></Svg> },
  { running: true, icon: <Windows10Box size={30} /> },
  { running: true, icon: <Svg w={28} h={24}><path d="M1 3c0-1.200.5-2 1.700-2H9l3 2.500V7H1z" fill="#f2ae17" /><path d="M1 6.500h9l2.500-2.500H27v16.500c0 .9-.500 1.500-1.500 1.500h-23C1.500 22 1 21.400 1 20.500z" fill="#ffd768" /></Svg> },
];

function HostTaskbar() {
  return (
    <div className="flex h-[58px] items-stretch border-t border-[#a9a9a9] bg-[#dadada] text-[#1a1a1a]">
      <div className="relative w-[167.200px] shrink-0 pl-[14px] pt-[10px]">
        <Svg w={28} h={34}>
          <path d="M1 5v4.500c0 2 3 3 6 3H3v6c0 4 20 4 20 0V13h-4l2-2V5z" fill="#f08c13" />
          <ellipse cx="11" cy="5.500" rx="10" ry="3" fill="#ffb53a" />
          <ellipse cx="11.500" cy="15.500" rx="11.500" ry="3" fill="#ffb53a" />
          <path d="M0 15.500v3c0 4.500 23 4.500 23 0v-3c0 4-23 4-23 0z" fill="#ee8410" />
          <path d="M3 10c2 1.500 9 1.500 12 1" stroke="#ffd070" strokeWidth="1.300" />
          <path d="M9 30.500l5-4.500 5 4.500" stroke="#57c11b" strokeWidth="3.500" />
        </Svg>
        <span className="absolute left-[27px] top-[7px] flex size-5 items-center justify-center rounded-full bg-[#c42b1c] text-[13px] leading-none text-white">1</span>
      </div>
      {hostApps.map((a, i) => (
        <div key={i} className="relative flex w-[55.100px] shrink-0 items-center justify-center">
          {a.active && <span className="absolute top-[5px] h-12 w-12 rounded-[5px] border border-[#e3e3e3] bg-[#f0f0f0]" />}
          <span className="relative flex">{a.icon}</span>
          {a.running && <span className="absolute bottom-1 h-1 w-2 rounded-full bg-[#7b7b7b]" />}
          {a.active && <span className="absolute bottom-1 h-1 w-5 rounded-full bg-[#0078d4]" />}
        </div>
      ))}
      <div className="ml-auto flex items-center">
        <Svg w={14} h={8} className="mr-[23px]"><path d="M1 7l6-6 6 6" stroke="#1a1a1a" strokeWidth="1.500" /></Svg>
        <Svg w={20} h={14}><path d="M5 13.500a5 5 0 01-.5-9.500 6.500 6.500 0 0111.500 1.500 4.200 4.200 0 01-.5 8z" fill="#0f5fb0" /><path d="M4.500 13.500c-4.500-.5-4.800-6 0-6.500 2-.2 3 .5 5 1.500L14 6.500c3.500-.8 6 1.500 6 4s-1.500 3-3.500 3z" fill="#1f9be8" /></Svg>
        <Svg w={18} h={18} className="ml-5"><circle cx="9" cy="9" r="8.700" fill="#b3b3b3" /><path d="M2 4c2-3 7-4 8-2L8 5l-2 1 2 3-3 3-4-5zM11 8l5-2 1.500 4-4.500 6-1-4-2-1z" fill="#dedede" /></Svg>
        <div className="ml-[26px] w-[28px] whitespace-nowrap text-center text-[15px] leading-5 tracking-[-0.300px]"><div>ESP</div><div>LAA</div></div>
        <Svg w={20} h={16} className="ml-[23px]"><path d="M1 6.500C6 1 14 1 19 6.500M4 9.500c3.500-3.800 8.500-3.800 12 0M7 12.500c2-2 4-2 6 0" stroke="#1a1a1a" strokeWidth="1.300" /><circle cx="10" cy="14" r="1.400" fill="#1a1a1a" /></Svg>
        <Svg w={21} h={17} className="ml-[10px]"><path d="M.700 6v5h3l4.500 4V2L3.700 6zM11 6c1 1.500 1 3.500 0 5M14 4c2 3 2 6 0 9M17 2c3 4 3 9 0 13" stroke="#1a1a1a" strokeWidth="1.200" /></Svg>
        <Svg w={21} h={17} className="ml-2"><rect x="2.500" y="5" width="15" height="10" rx="2.500" stroke="#1a1a1a" strokeWidth="1.400" /><rect x="5" y="7.500" width="10" height="5" fill="#1a1a1a" /><path d="M19 8v4" stroke="#1a1a1a" strokeWidth="2" /><path d="M4.500 0L0 6.500h3L2 11l5-6.500H4z" fill="#1a1a1a" stroke="#dadada" strokeWidth=".6" /></Svg>
        <div className="-mt-[2px] w-[98px] whitespace-nowrap text-right text-[15px] leading-5 tracking-[-0.200px]"><div>12:35</div><div>13/11/2023</div></div>
        <Svg w={18} h={20} className="ml-[11px] mr-[25px]"><path d="M0 16.500l2-3V9c0-4 2.500-6.500 6-6.500s6 2.500 6 6.500v4.500l2 3z" fill="#1a1a1a" /><path d="M5.500 18a2.600 2.600 0 005 0z" fill="#1a1a1a" /><path d="M6 8.500h4L6 13.500h4" stroke="#dadada" strokeWidth="1.300" /><rect x="11" y="0" width="7" height="8" fill="#dadada" /><path d="M12.500 2H16l-3.500 4.500H16.500" stroke="#1a1a1a" strokeWidth="1.400" /></Svg>
      </div>
    </div>
  );
}

export default function App() {
  return (
    <div className={`flex h-[1078px] w-[1920px] flex-col overflow-hidden bg-white ${UI} antialiased`}>
      <HostTitle />
      <HostMenu />
      <GuestTaskbar />
      <TabStrip />
      <Toolbar />
      <PageView />
      <StatusBar />
      <HostTaskbar />
    </div>
  );
}
